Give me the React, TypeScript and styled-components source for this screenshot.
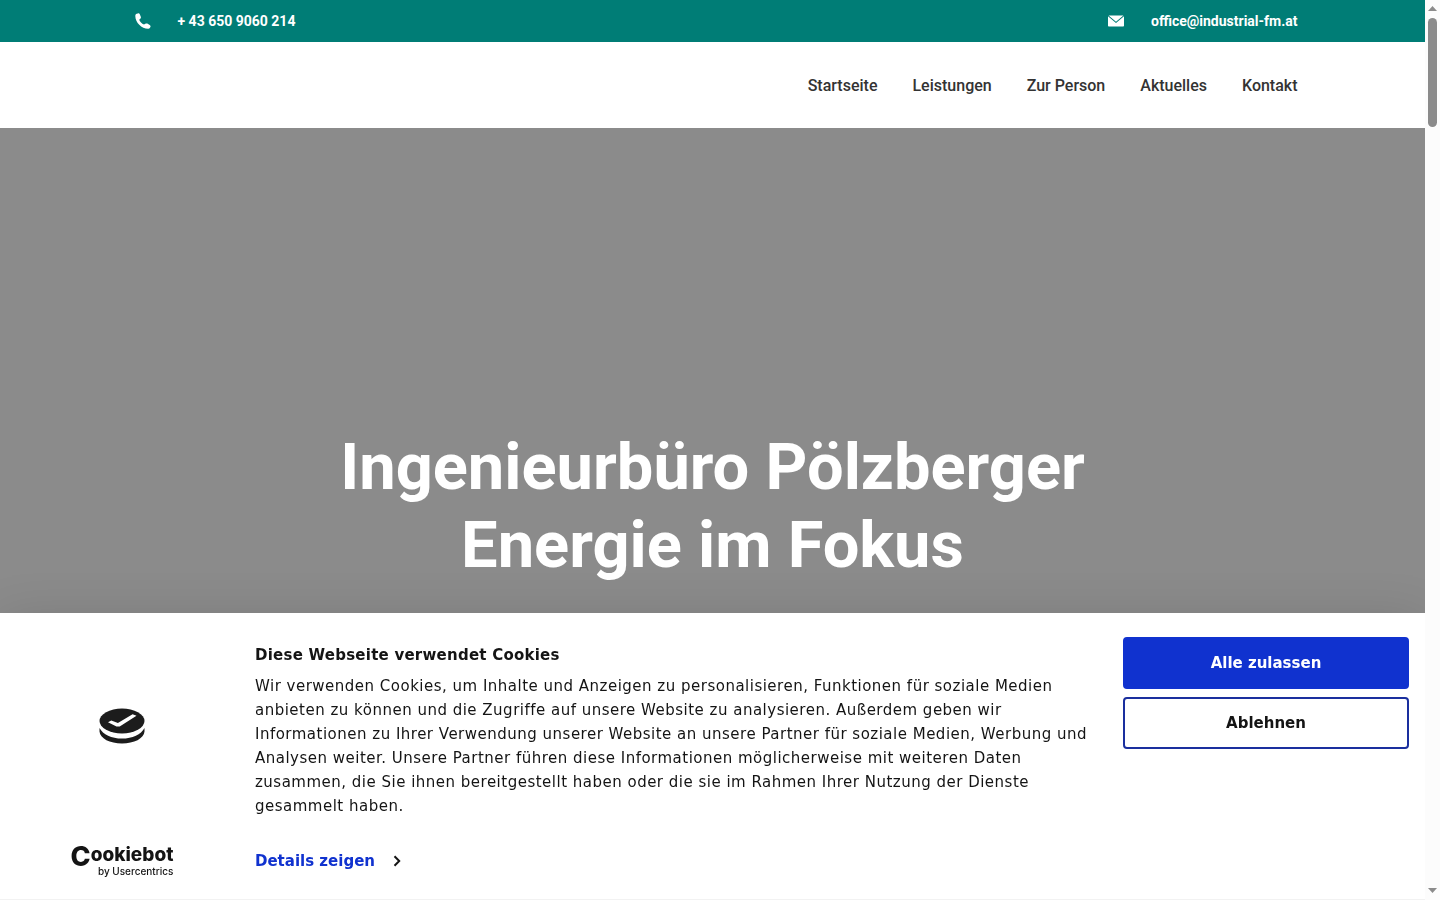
import React from "react";
import styled, { createGlobalStyle } from "styled-components";

const GlobalStyle = createGlobalStyle`
  *, *::before, *::after { box-sizing: border-box; }
  body { margin: 0; background: #fff; overflow: hidden; font-family: Roboto, sans-serif; }
  h1, h2, p, ul { margin: 0; padding: 0; }
  a { text-decoration: none; }
`;

const Shell = styled.div`
  display: grid;
  grid-template-columns: minmax(0, 1fr) 15px;
  height: 100vh;
`;

const Page = styled.div`
  display: flex;
  flex-direction: column;
  min-height: 0;
`;

const Container = styled.div`
  display: flex;
  align-items: center;
  justify-content: space-between;
  width: 100%;
  max-width: 1170px;
  margin: 0 auto;
`;

const TopBar = styled.div`
  display: flex;
  flex: none;
  height: 42px;
  background: #007d76;
`;

const ContactLink = styled.a`
  display: flex;
  align-items: center;
  gap: 27px;
  color: #fff;
  font-size: 14px;
  line-height: 20px;
  font-weight: 700;
`;

const ContactIcon = styled.svg`
  flex: none;
  width: 16px;
  height: 16px;
  fill: #fff;
`;

const PhoneGroup = styled.div`
  padding-left: 7px;
`;

const Header = styled.header`
  display: flex;
  flex: none;
  height: 86px;
  padding-top: 2px;
  background: #fff;
`;

const Nav = styled.nav`
  display: flex;
  gap: 35px;
  margin-left: auto;
`;

const NavLink = styled.a`
  color: #333;
  font-size: 16px;
  line-height: 24px;
  font-weight: 500;
`;

const Hero = styled.main`
  flex: 1;
  min-height: 0;
  padding-top: 300px;
  background: #8b8b8b;
`;

const HeroTitle = styled.h1`
  color: #fff;
  font-size: 65px;
  line-height: 78px;
  font-weight: 700;
  text-align: center;
`;

const ScrollTrack = styled.div`
  display: flex;
  z-index: 2;
  flex-direction: column;
  align-items: center;
  justify-content: space-between;
  padding: 6px 0 7px;
  background: #fcfcfc;
`;

const ScrollTop = styled.div`
  display: flex;
  flex-direction: column;
  align-items: center;
  gap: 7px;
`;

const ScrollArrow = styled.svg`
  display: block;
  width: 9px;
  height: 5px;
  fill: #8b8b8b;
`;

const ScrollThumb = styled.div`
  width: 9px;
  height: 109px;
  border-radius: 5px;
  background: #8b8b8b;
`;

const Banner = styled.section`
  position: fixed;
  z-index: 1;
  left: 0;
  right: 15px;
  bottom: 0;
  display: grid;
  grid-template-columns: 239px minmax(0, 1fr) 302px;
  min-height: 287px;
  padding: 24px 0 22px;
  border-bottom: 1px solid #f2f2f2;
  background: #fff;
  box-shadow: 0 8px 48px rgba(0, 0, 0, 0.15);
  color: #141414;
  font-family: "DejaVu Sans", sans-serif;
  font-size: 15px;
  line-height: 24px;
`;

const BrandColumn = styled.div`
  display: flex;
  flex-direction: column;
  align-items: center;
  justify-content: space-between;
  padding: 71px 0 0 5px;
`;

const CookieMark = styled.svg`
  width: 46px;
  height: 36px;
`;

const BrandLink = styled.a`
  display: flex;
  align-items: flex-start;
  color: #141414;
  font-family: Inter, sans-serif;
`;

const BrandInitial = styled.span`
  font-size: 27px;
  line-height: 24px;
  font-weight: 800;
`;

const BrandRest = styled.span`
  display: flex;
  flex-direction: column;
  align-items: flex-end;
`;

const BrandName = styled.span`
  font-size: 19px;
  line-height: 20px;
  font-weight: 800;
`;

const BrandNote = styled.span`
  font-size: 10px;
  line-height: 12px;
  font-weight: 500;
`;

const TextColumn = styled.div`
  display: flex;
  flex-direction: column;
  justify-content: space-between;
  padding: 6px 32px 4px 16px;
`;

const BannerTitle = styled.h2`
  padding-bottom: 7px;
  font-size: 15px;
  line-height: 24px;
  font-weight: 700;
  letter-spacing: 0.016em;
`;

const BannerText = styled.p`
  letter-spacing: 0.033em;
`;

const DetailsLink = styled.a`
  display: flex;
  align-items: center;
  align-self: flex-start;
  gap: 18px;
  color: #1032cf;
  font-weight: 700;
`;

const Chevron = styled.svg`
  width: 8px;
  height: 12px;
  fill: none;
  stroke: #141414;
  stroke-width: 2;
`;

const Actions = styled.div`
  display: flex;
  flex-direction: column;
  gap: 8px;
  padding-right: 16px;
`;

const ActionButton = styled.button<{ $primary?: boolean }>`
  height: 52px;
  border: 2px solid ${(p) => (p.$primary ? "#1032cf" : "#1a2f9e")};
  border-radius: 4px;
  background: ${(p) => (p.$primary ? "#1032cf" : "#fff")};
  color: ${(p) => (p.$primary ? "#fff" : "#141414")};
  font-family: inherit;
  font-size: 15px;
  font-weight: 700;
  cursor: pointer;
`;

const navItems = ["Startseite", "Leistungen", "Zur Person", "Aktuelles", "Kontakt"];

export default function App() {
  return (
    <>
      <GlobalStyle />
      <Shell>
        <Page>
          <TopBar>
            <Container>
              <PhoneGroup>
                <ContactLink href="tel:+436509060214">
                  <ContactIcon viewBox="0 0 16 16" aria-hidden="true">
                    <path d="M1.700.8 2.800.4c.9-.3 1.800.1 2.100 1l.9 2.300c.3.800.1 1.500-.5 2L4.200 6.700c.8 2.100 2.400 3.900 4.800 4.900l1.400-.9c.6-.4 1.300-.4 1.900-.1l2.400 1.300c.8.4 1.100 1.300.7 2.100l-.3.500c-.4.800-1.100 1.200-1.900 1.200C6.500 15.700.4 9.700.3 3c0-1 .5-1.900 1.400-2.200Z" />
                  </ContactIcon>
                  + 43 650 9060 214
                </ContactLink>
              </PhoneGroup>
              <ContactLink href="mailto:office@industrial-fm.at">
                <ContactIcon viewBox="0 0 16 16" aria-hidden="true">
                  <path d="M.6 2.500h14.800L8 8.700ZM0 3.200l8 6.700 8-6.700v9.600c0 .5-.3.800-.8.800H.8c-.5 0-.8-.3-.8-.8Z" />
                </ContactIcon>
                office@industrial-fm.at
              </ContactLink>
            </Container>
          </TopBar>
          <Header>
            <Container>
              <Nav>
                {navItems.map((item) => (
                  <NavLink key={item} href="#">
                    {item}
                  </NavLink>
                ))}
              </Nav>
            </Container>
          </Header>
          <Hero>
            <HeroTitle>
              Ingenieurbüro Pölzberger
              <br />
              Energie im Fokus
            </HeroTitle>
          </Hero>
        </Page>
        <ScrollTrack aria-hidden="true">
          <ScrollTop>
            <ScrollArrow viewBox="0 0 9 5">
              <path d="M0 5 4.500 0 9 5Z" />
            </ScrollArrow>
            <ScrollThumb />
          </ScrollTop>
          <ScrollArrow viewBox="0 0 9 5">
            <path d="M0 0h9L4.500 5Z" />
          </ScrollArrow>
        </ScrollTrack>
      </Shell>
      <Banner role="dialog" aria-labelledby="cookie-title">
        <BrandColumn>
          <CookieMark viewBox="0 0 46 36" aria-hidden="true">
            <ellipse cx="23" cy="13" rx="22.500" ry="12.500" fill="#1c1c1c" />
            <path d="M.5 20C4 26.500 12.500 30.600 23 30.600S42 26.500 45.500 20v3.500C45 30.500 35 35.500 23 35.500S1 30.500.5 23.500Z" fill="#1c1c1c" />
            <path d="m9 14.200 3.300-1.600 6.600 2.500L33.600 6.300l3.900 1.500-16.800 10.600-3.200.2Z" fill="#fff" />
          </CookieMark>
          <BrandLink href="#">
            <BrandInitial>C</BrandInitial>
            <BrandRest>
              <BrandName>ookiebot</BrandName>
              <BrandNote>by Usercentrics</BrandNote>
            </BrandRest>
          </BrandLink>
        </BrandColumn>
        <TextColumn>
          <div>
            <BannerTitle id="cookie-title">Diese Webseite verwendet Cookies</BannerTitle>
            <BannerText>
              Wir verwenden Cookies, um Inhalte und Anzeigen zu personalisieren, Funktionen für soziale Medien anbieten zu
              können und die Zugriffe auf unsere Website zu analysieren. Außerdem geben wir Informationen zu Ihrer
              Verwendung unserer Website an unsere Partner für soziale Medien, Werbung und Analysen weiter. Unsere Partner
              führen diese Informationen möglicherweise mit weiteren Daten zusammen, die Sie ihnen bereitgestellt haben
              oder die sie im Rahmen Ihrer Nutzung der Dienste gesammelt haben.
            </BannerText>
          </div>
          <DetailsLink href="#">
            Details zeigen
            <Chevron viewBox="0 0 8 12" aria-hidden="true">
              <path d="m1.500 1.300 4.700 4.700-4.700 4.700" />
            </Chevron>
          </DetailsLink>
        </TextColumn>
        <Actions>
          <ActionButton type="button" $primary>
            Alle zulassen
          </ActionButton>
          <ActionButton type="button">Ablehnen</ActionButton>
        </Actions>
      </Banner>
    </>
  );
}
